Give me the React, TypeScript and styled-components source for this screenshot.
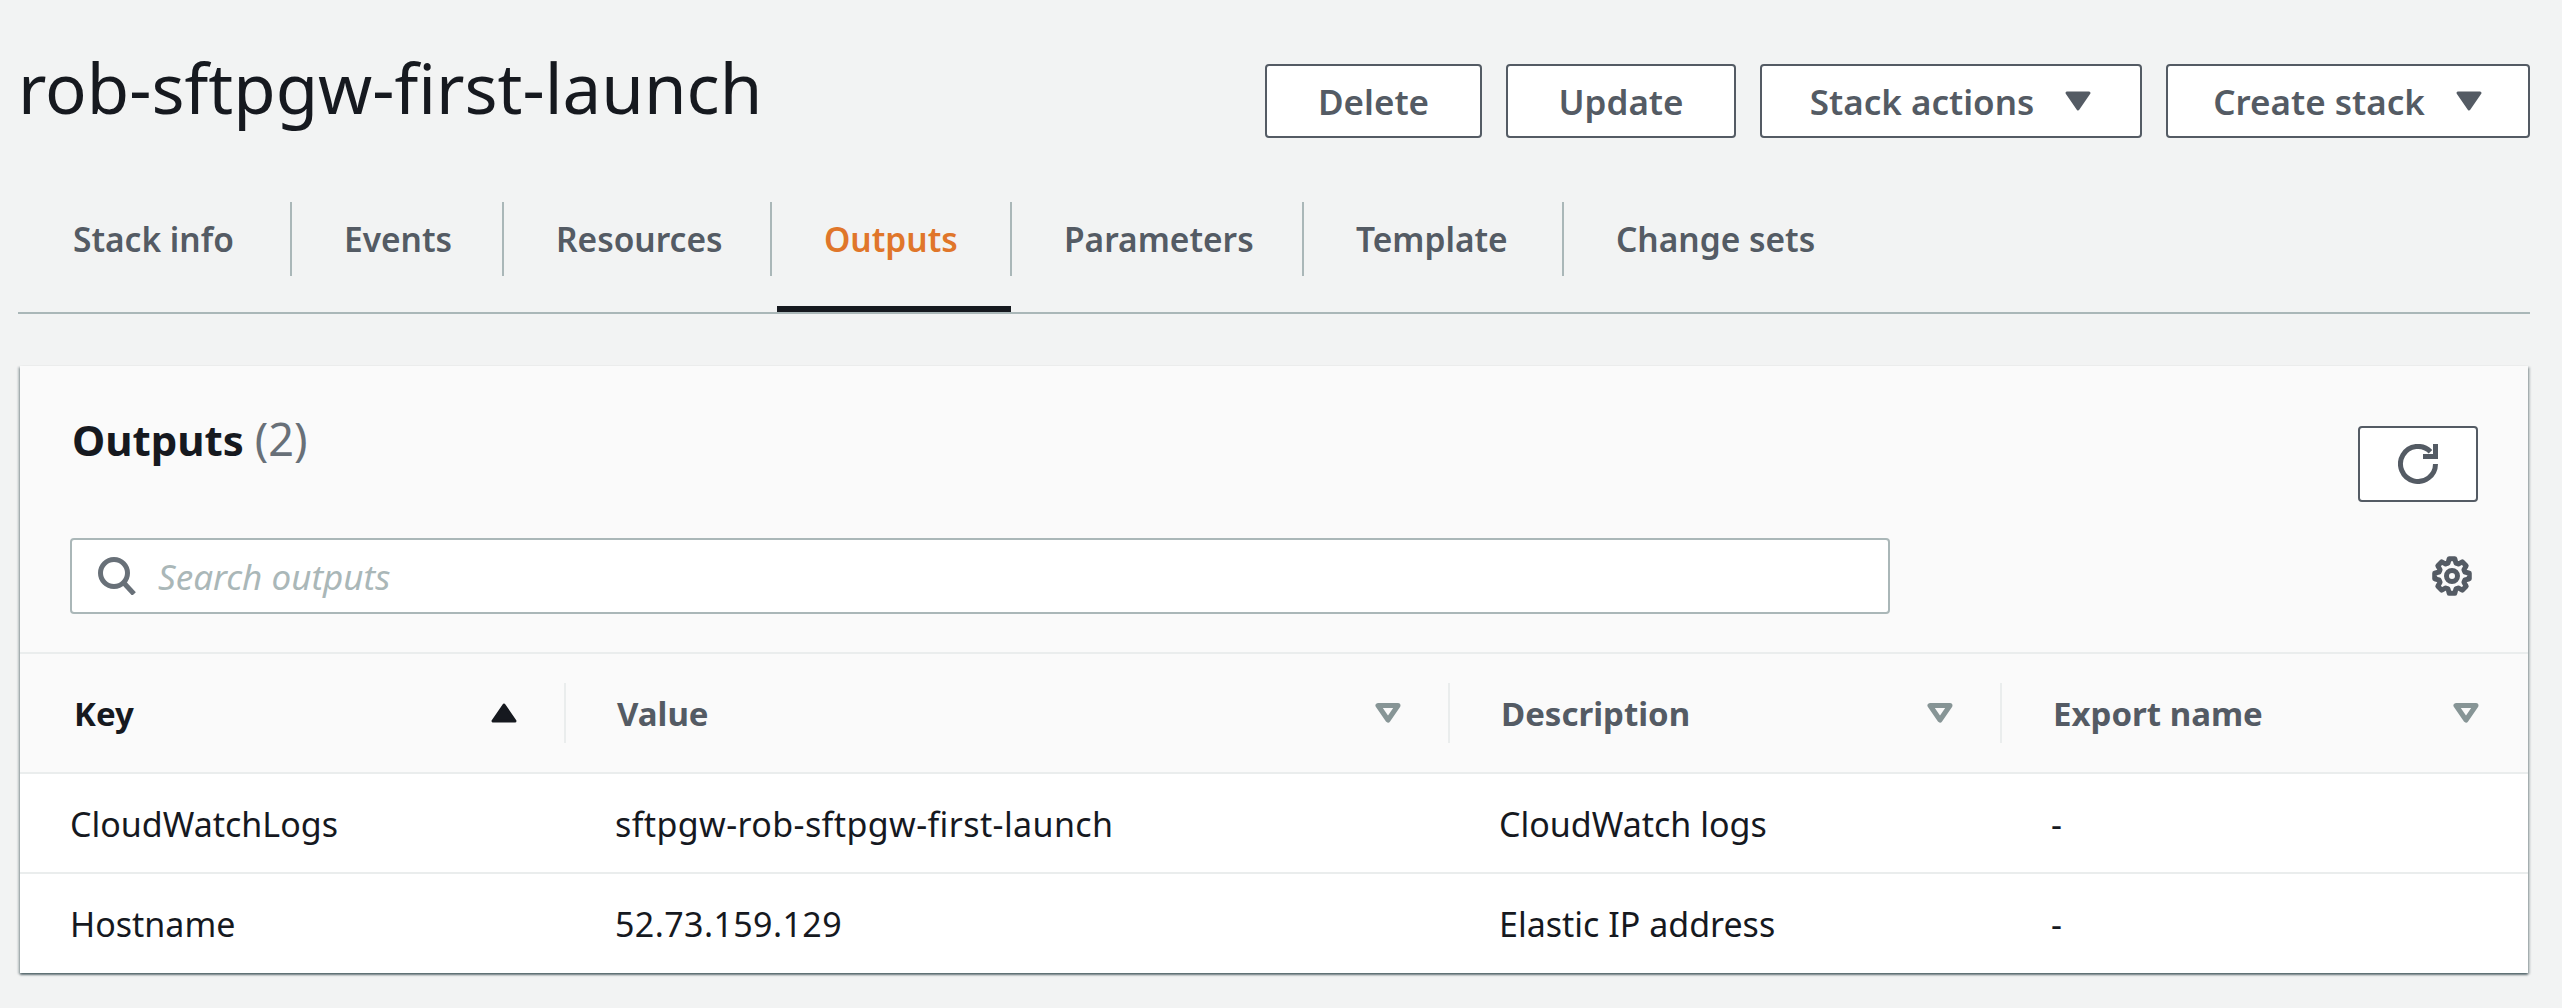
import styled, { createGlobalStyle } from "styled-components";

const GlobalStyle = createGlobalStyle`
  html, body {
    margin: 0;
    padding: 0;
    background: #f2f3f3;
  }
  body {
    font-family: "Noto Sans", "Open Sans", sans-serif;
    color: #16191f;
  }
`;

const Page = styled.div`
  width: 2562px;
  height: 1008px;
  box-sizing: border-box;
  padding: 64px 32px 0 18px;
  overflow: hidden;
`;

const Header = styled.header`
  display: flex;
  justify-content: space-between;
  align-items: flex-start;
  height: 74px;
`;

const Title = styled.h1`
  margin: -22px 0 0;
  font-size: 69px;
  line-height: 90px;
  font-weight: 400;
`;

const Actions = styled.div`
  display: flex;
  gap: 24px;
`;

const Button = styled.button<{ $width: number }>`
  display: flex;
  align-items: center;
  justify-content: center;
  gap: 30px;
  box-sizing: border-box;
  width: ${(p) => p.$width}px;
  height: 74px;
  padding: 0;
  background: #fff;
  border: 2px solid #545b64;
  border-radius: 4px;
  color: #545b64;
  font-family: inherit;
  font-size: 35px;
  font-weight: 600;
`;

const Tabs = styled.nav`
  display: flex;
  margin-top: 64px;
  border-bottom: 2px solid #aab7b8;
`;

const Tab = styled.div<{ $active?: boolean; $width: number }>`
  position: relative;
  width: ${(p) => p.$width}px;
  padding-bottom: 36px;

  &::after {
    content: "";
    display: ${(p) => (p.$active ? "block" : "none")};
    position: absolute;
    left: 5px;
    right: 1px;
    bottom: 0;
    height: 6px;
    background: #16191f;
  }
`;

const TabLabel = styled.div<{ $active?: boolean; $first?: boolean; $last?: boolean }>`
  display: flex;
  align-items: center;
  box-sizing: border-box;
  height: 74px;
  padding-left: ${(p) => (p.$first ? "55px" : "52px")};
  border-right: ${(p) => (p.$last ? "none" : "2px solid #aab7b8")};
  color: ${(p) => (p.$active ? "#e0762a" : "#545b64")};
  font-size: 33.5px;
  font-weight: 600;
  white-space: nowrap;
`;

const Card = styled.section`
  margin: 52px 2px 0 2px;
  background: #fff;
  box-shadow: 0 2px 2px 0 rgba(0, 28, 36, 0.5), 2px 1px 2px 0 rgba(0, 28, 36, 0.2),
    -2px 1px 2px 0 rgba(0, 28, 36, 0.2);
`;

const CardHead = styled.div`
  display: grid;
  grid-template-columns: 1820px 1fr;
  align-content: start;
  box-sizing: border-box;
  height: 288px;
  padding: 60px 50px 0 50px;
  background: #fafafa;
  border-bottom: 2px solid #eaeded;
`;

const HeadTitle = styled.h2`
  margin: -16px 0 0 2px;
  font-size: 42px;
  line-height: 58px;
  font-weight: 700;
  white-space: nowrap;
`;

const Count = styled.span`
  color: #687078;
  font-size: 45px;
  font-weight: 400;
`;

const RefreshSlot = styled.div`
  display: flex;
  justify-content: flex-end;
`;

const RefreshButton = styled.button`
  display: flex;
  align-items: center;
  justify-content: center;
  box-sizing: border-box;
  width: 120px;
  height: 76px;
  padding: 0;
  background: #fff;
  border: 2px solid #545b64;
  border-radius: 4px;
  color: #545b64;
`;

const SearchBox = styled.div`
  display: flex;
  align-items: center;
  gap: 22px;
  box-sizing: border-box;
  height: 76px;
  margin: 36px 0 0;
  padding: 0 26px;
  background: #fff;
  border: 2px solid #aab7b8;
  border-radius: 4px;
`;

const Placeholder = styled.span`
  color: #aab7b8;
  font-size: 35px;
  font-style: italic;
`;

const GearSlot = styled.div`
  display: flex;
  align-items: center;
  justify-content: flex-end;
  margin-top: 36px;
  height: 76px;
  padding-right: 6px;
  color: #545b64;
`;

const Table = styled.div`
  display: grid;
  grid-template-columns: 546px 884px 552px 1fr;
`;

const HeadCell = styled.div`
  display: flex;
  align-items: center;
  box-sizing: border-box;
  height: 120px;
  background: #fafafa;
  border-bottom: 2px solid #eaeded;
`;

const HeadInner = styled.div<{ $sorted?: boolean; $last?: boolean }>`
  flex: 1;
  display: flex;
  align-items: center;
  justify-content: space-between;
  box-sizing: border-box;
  height: 60px;
  padding: 0 ${(p) => (p.$last ? "48px" : "46px")} 0 ${(p) => (p.$sorted ? "54px" : "51px")};
  border-right: ${(p) => (p.$last ? "none" : "2px solid #eaeded")};
  color: ${(p) => (p.$sorted ? "#16191f" : "#545b64")};
  font-size: 33px;
  font-weight: 700;
`;

const Cell = styled.div<{ $last?: boolean; $first?: boolean; $spaced?: boolean }>`
  display: flex;
  align-items: center;
  box-sizing: border-box;
  height: ${(p) => (p.$last ? "99px" : "100px")};
  padding-left: ${(p) => (p.$first ? "50px" : "49px")};
  padding-top: ${(p) => (p.$last ? "0" : "2px")};
  border-bottom: ${(p) => (p.$last ? "none" : "2px solid #eaeded")};
  font-size: 34px;
  letter-spacing: ${(p) => (p.$spaced ? "0.4px" : "0")};
`;

const Caret = () => (
  <svg width="28" height="22" viewBox="0 0 28 22" fill="#545b64" stroke="#545b64" strokeWidth="3" strokeLinejoin="round">
    <path d="M3 3h22L14 19z" />
  </svg>
);

const SortUp = () => (
  <svg width="28" height="22" viewBox="0 0 28 22" fill="#16191f" stroke="#16191f" strokeWidth="3" strokeLinejoin="round">
    <path d="M3 19h22L14 3z" />
  </svg>
);

const FilterDown = () => (
  <svg width="28" height="22" viewBox="0 0 28 22" fill="none" stroke="#879596" strokeWidth="5" strokeLinejoin="round">
    <path d="M4 3.5h20L14 18z" />
  </svg>
);

const RefreshIcon = () => (
  <svg width="40" height="40" viewBox="0 0 40 40" fill="none" stroke="currentColor" strokeWidth="5">
    <path d="M37.5 20A17.5 17.5 0 1 1 32.5 7.7" />
    <path d="M37.5 0v12.5H25" />
  </svg>
);

const SearchIcon = () => (
  <svg width="38" height="38" viewBox="0 0 38 38" fill="none" stroke="#687078" strokeWidth="5">
    <circle cx="16" cy="16" r="13.5" />
    <path d="M25 25l11 12" />
  </svg>
);

// eight teeth, worked out from polar points
const gearPath = () => {
  const pts: string[] = [];
  for (let i = 0; i < 8; i++) {
    const a = (i * Math.PI) / 4 - Math.PI / 2;
    const at = (r: number, off: number) =>
      `${(20 + r * Math.cos(a + off)).toFixed(2)} ${(20 + r * Math.sin(a + off)).toFixed(2)}`;
    pts.push(at(13.5, -0.3), at(17.5, -0.16), at(17.5, 0.16), at(13.5, 0.3));
  }
  return "M" + pts.join("L") + "z";
};

const GearIcon = () => (
  <svg width="40" height="40" viewBox="0 0 40 40" fill="none" stroke="currentColor" strokeWidth="5" strokeLinejoin="round">
    <path d={gearPath()} />
    <circle cx="20" cy="20" r="5.5" />
  </svg>
);

const tabs = [
  { label: "Stack info", width: 274 },
  { label: "Events", width: 212 },
  { label: "Resources", width: 268 },
  { label: "Outputs", width: 240 },
  { label: "Parameters", width: 292 },
  { label: "Template", width: 260 },
  { label: "Change sets", width: 300 },
];

const columns = ["Key", "Value", "Description", "Export name"];

const rows = [
  ["CloudWatchLogs", "sftpgw-rob-sftpgw-first-launch", "CloudWatch logs", "-"],
  ["Hostname", "52.73.159.129", "Elastic IP address", "-"],
];

export default function App() {
  return (
    <Page>
      <GlobalStyle />
      <Header>
        <Title>rob-sftpgw-first-launch</Title>
        <Actions>
          <Button $width={217}>Delete</Button>
          <Button $width={230}>Update</Button>
          <Button $width={382}>
            Stack actions
            <Caret />
          </Button>
          <Button $width={364}>
            Create stack
            <Caret />
          </Button>
        </Actions>
      </Header>
      <Tabs>
        {tabs.map((t, i) => (
          <Tab key={t.label} $width={t.width} $active={t.label === "Outputs"}>
            <TabLabel $active={t.label === "Outputs"} $first={i === 0} $last={i === tabs.length - 1}>
              {t.label}
            </TabLabel>
          </Tab>
        ))}
      </Tabs>
      <Card>
        <CardHead>
          <HeadTitle>
            Outputs <Count>(2)</Count>
          </HeadTitle>
          <RefreshSlot>
            <RefreshButton>
              <RefreshIcon />
            </RefreshButton>
          </RefreshSlot>
          <SearchBox>
            <SearchIcon />
            <Placeholder>Search outputs</Placeholder>
          </SearchBox>
          <GearSlot>
            <GearIcon />
          </GearSlot>
        </CardHead>
        <Table>
          {columns.map((c, i) => (
            <HeadCell key={c}>
              <HeadInner $sorted={i === 0} $last={i === columns.length - 1}>
                <span>{c}</span>
                {i === 0 ? <SortUp /> : <FilterDown />}
              </HeadInner>
            </HeadCell>
          ))}
          {rows.map((r, ri) =>
            r.map((v, ci) => (
              <Cell key={ri + "-" + ci} $first={ci === 0} $spaced={ci === 1} $last={ri === rows.length - 1}>
                {v}
              </Cell>
            ))
          )}
        </Table>
      </Card>
    </Page>
  );
}
